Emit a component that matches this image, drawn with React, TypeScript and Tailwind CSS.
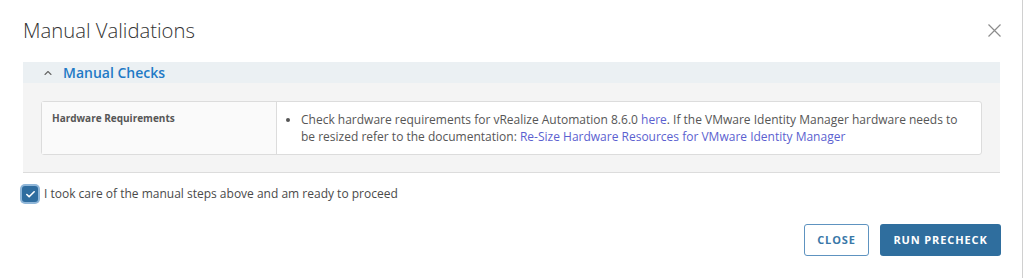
import { Check, ChevronUp } from 'lucide-react';

const font = { fontFamily: "'Open Sans', Lato, sans-serif" };

export default function App() {
  return (
    <div className="h-[278px] w-[1023px] border-r border-[#d0d0d0] bg-white text-[#565656]" style={font}>
      <div className="flex items-start justify-between pl-[23px] pr-[21px] pt-[17px]">
        <h1 className="text-[20.3px] font-light leading-[26px] text-[#333]">Manual Validations</h1>
        <svg className="mt-[7px]" width="13" height="13" viewBox="0 0 13 13" fill="none" stroke="#8c8c8c" strokeWidth="1.2">
          <path d="M0.5 0.5 L12.5 12.5 M12.5 0.5 L0.5 12.5" />
        </svg>
      </div>

      <div className="ml-[23px] mt-[19px] w-[977px] border-b border-[#dcdcdc] bg-[#f4f4f4]">
        <div className="flex h-[21px] items-center bg-[#ebf0f3] pl-[19px]">
          <ChevronUp className="h-[12px] w-[12px] text-[#666]" strokeWidth={2.2} />
          <span className="ml-[9px] text-[14px] font-semibold text-[#1f7ac6]">Manual Checks</span>
        </div>
        <div className="px-[18px] pb-[17px] pt-[18px]">
          <div className="flex rounded-[3px] border border-[#dcdcdc] bg-white">
            <div className="w-[235px] shrink-0 border-r border-[#dcdcdc] bg-[#fafafa] px-[10px] pt-[9px] text-[10px] font-bold text-[#565656]">
              Hardware Requirements
            </div>
            <ul className="list-disc pb-[9px] pl-[24px] pr-[20px] pt-[9px] text-[12px] leading-[17px] text-[#565656]">
              <li>
                Check hardware requirements for vRealize Automation 8.6.0{' '}
                <a className="text-[#5b5fd0]">here</a>. If the VMware Identity Manager hardware needs to be
                resized refer to the documentation:{' '}
                <a className="text-[#5b5fd0]">Re-Size Hardware Resources for VMware Identity Manager</a>
              </li>
            </ul>
          </div>
        </div>
      </div>

      <label className="ml-[22px] mt-[12px] flex items-center gap-[6px] text-[12px] text-[#4a4a4a]">
        <span className="flex h-[16px] w-[16px] items-center justify-center rounded-[3px] bg-[#2f6d9f] ring-2 ring-[#8fb6d8]">
          <Check className="h-[11px] w-[11px] text-white" strokeWidth={3.5} />
        </span>
        I took care of the manual steps above and am ready to proceed
      </label>

      <div className="mr-[21px] mt-[21px] flex justify-end gap-[11px]">
        <button className="h-[32px] w-[65px] rounded-[3px] border border-[#5e93c0] text-[11px] font-bold tracking-[0.08em] text-[#3a78a8]">
          CLOSE
        </button>
        <button className="h-[32px] w-[121px] rounded-[3px] bg-[#2f6e9e] text-[11px] font-bold tracking-[0.08em] text-white">
          RUN PRECHECK
        </button>
      </div>
    </div>
  );
}
